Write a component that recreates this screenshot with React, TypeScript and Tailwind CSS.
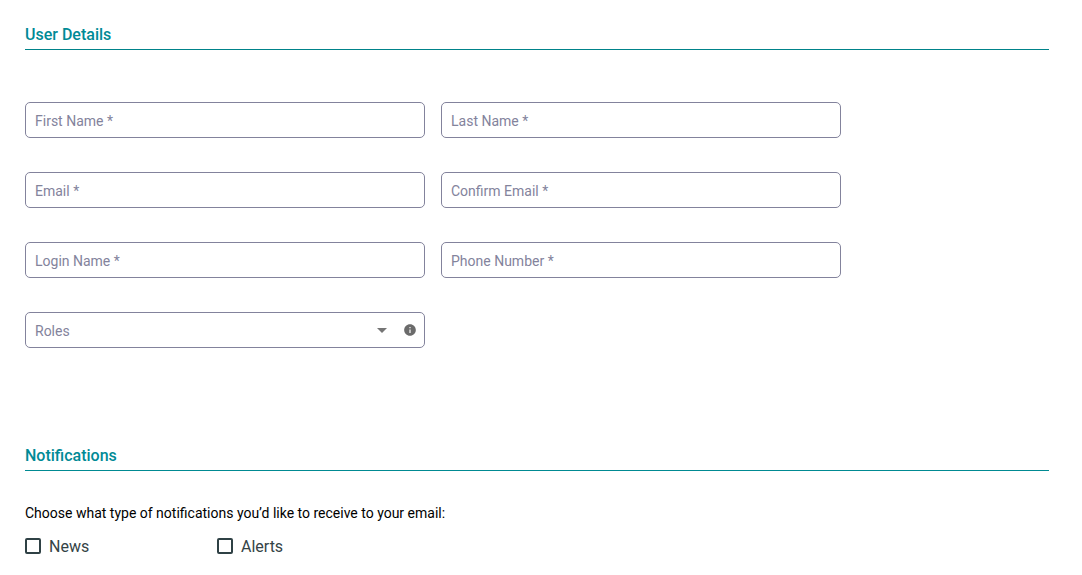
import { useState } from "react";

const controlClass =
  "peer h-9 w-full appearance-none rounded-[5px] border border-[#83839c] bg-white pl-[9px] pt-0.5 text-sm text-[#22223a] outline-none focus:border-[#008a92]";

const labelClass =
  "pointer-events-none absolute inset-y-0 left-[10px] flex items-center pt-0.5 text-sm text-[#83839c]";

function Field({ id, label, type = "text" }: { id: string; label: string; type?: string }) {
  const [value, setValue] = useState("");
  return (
    <div className="relative">
      <input
        id={id}
        type={type}
        value={value}
        onChange={(e) => setValue(e.target.value)}
        required
        className={controlClass}
      />
      <label htmlFor={id} className={value ? "hidden" : labelClass}>
        {label} *
      </label>
    </div>
  );
}

function RolesSelect() {
  const [role, setRole] = useState("");
  return (
    <div className="relative">
      <select id="roles" value={role} onChange={(e) => setRole(e.target.value)} className={controlClass}>
        <option value=""></option>
      </select>
      <label htmlFor="roles" className={role ? "hidden" : labelClass}>
        Roles
      </label>
      <div className="pointer-events-none absolute inset-y-0 right-2 flex items-center gap-[9px]">
        <svg viewBox="0 0 24 24" className="size-6 fill-[#757575]" aria-hidden="true">
          <path d="M7 10l5 5 5-5z" />
        </svg>
        <svg viewBox="0 0 24 24" className="size-[14px] fill-[#6b6b6b]" aria-hidden="true">
          <path d="M12 2C6.48 2 2 6.48 2 12s4.48 10 10 10 10-4.48 10-10S17.52 2 12 2zm1 15h-2v-6h2v6zm0-8h-2V7h2v2z" />
        </svg>
      </div>
    </div>
  );
}

function CheckOption({ label }: { label: string }) {
  return (
    <label className="flex w-48 items-start gap-2 text-base text-[#344346]">
      <input
        type="checkbox"
        className="mt-[3px] size-4 appearance-none rounded-[2px] border-2 border-[#2f4145] bg-white checked:bg-[#008a92]"
      />
      {label}
    </label>
  );
}

export default function App() {
  return (
    <form className="pt-6 pr-[33px] pl-[25px] font-['Roboto',sans-serif] text-black">
      <section>
        <h2 className="border-b border-[#00838a] pb-1 text-base leading-[21px] font-medium text-[#008a96]">
          User Details
        </h2>
        <div className="mt-[52px] grid max-w-[816px] grid-cols-2 gap-x-4 gap-y-[34px]">
          <Field id="first-name" label="First Name" />
          <Field id="last-name" label="Last Name" />
          <Field id="email" label="Email" type="email" />
          <Field id="confirm-email" label="Confirm Email" type="email" />
          <Field id="login-name" label="Login Name" />
          <Field id="phone" label="Phone Number" type="tel" />
          <RolesSelect />
        </div>
      </section>
      <section className="mt-[97px]">
        <h2 className="border-b border-[#008a92] pb-1 text-base leading-[21px] font-medium text-[#008a96]">
          Notifications
        </h2>
        <fieldset className="mt-8">
          <legend className="text-sm leading-5">
            Choose what type of notifications you’d like to receive to your email:
          </legend>
          <div className="mt-3 flex">
            <CheckOption label="News" />
            <CheckOption label="Alerts" />
          </div>
        </fieldset>
      </section>
    </form>
  );
}
